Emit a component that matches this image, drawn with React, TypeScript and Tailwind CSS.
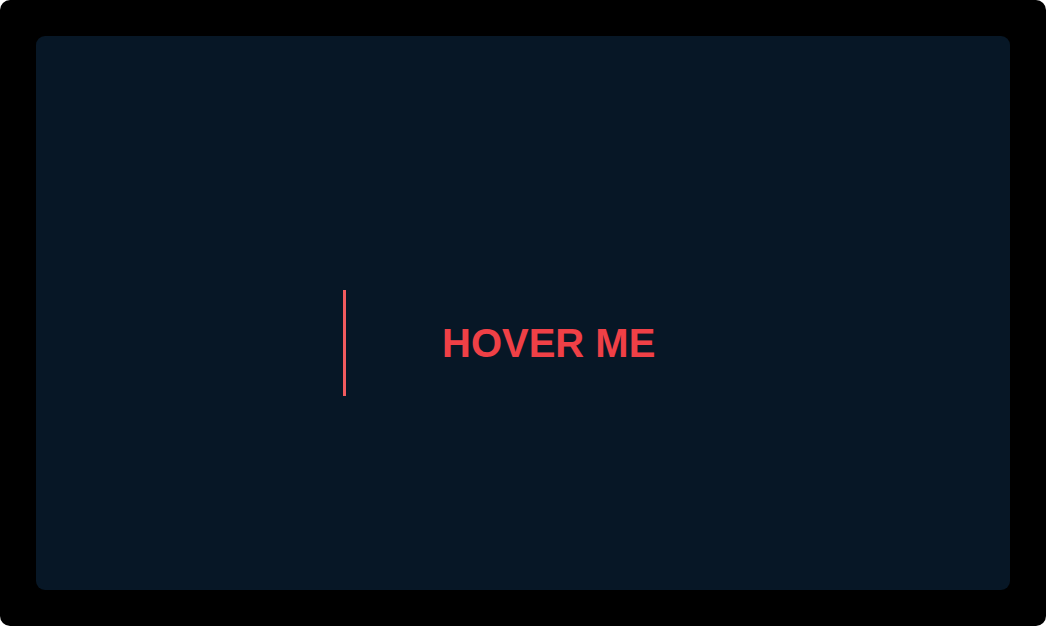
export default function App() {
  return (
    <div className="min-h-screen bg-white">
      <div className="h-[626px] w-[1046px] rounded-[10px] bg-black p-[36px]">
        <div className="flex h-full w-full items-start rounded-[9px] bg-[#071726] pl-[307px] pt-[254px]">
          <div className="flex items-center">
            <div className="h-[106px] w-[3px] bg-[#f15b5f]" />
            <span className="ml-[96px] font-['Liberation_Sans',Arial,sans-serif] text-[40px] font-bold leading-none text-[#ef4046]">
              HOVER ME
            </span>
          </div>
        </div>
      </div>
    </div>
  );
}
